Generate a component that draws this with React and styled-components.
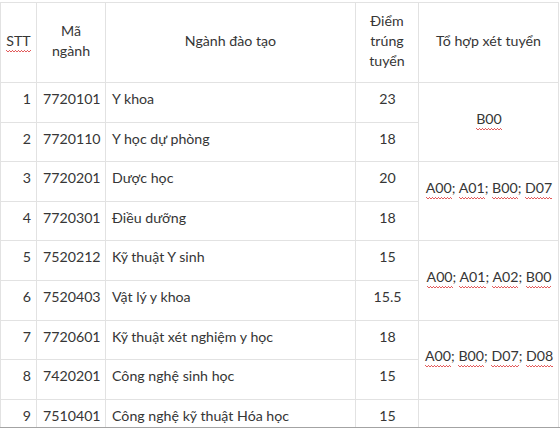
import styled, { createGlobalStyle } from "styled-components";

const rows = [
    { stt: 1, code: "7720101", name: "Y khoa", score: "23", group: { codes: ["B00"], span: 2 } },
    { stt: 2, code: "7720110", name: "Y học dự phòng", score: "18" },
    { stt: 3, code: "7720201", name: "Dược học", score: "20", group: { codes: ["A00", "A01", "B00", "D07"], span: 2, blankLine: true } },
    { stt: 4, code: "7720301", name: "Điều dưỡng", score: "18" },
    { stt: 5, code: "7520212", name: "Kỹ thuật Y sinh", score: "15", group: { codes: ["A00", "A01", "A02", "B00"], span: 2 } },
    { stt: 6, code: "7520403", name: "Vật lý y khoa", score: "15.5" },
    { stt: 7, code: "7720601", name: "Kỹ thuật xét nghiệm y học", score: "18", group: { codes: ["A00", "B00", "D07", "D08"], span: 2 } },
    { stt: 8, code: "7420201", name: "Công nghệ sinh học", score: "15" },
    { stt: 9, code: "7510401", name: "Công nghệ kỹ thuật Hóa học", score: "15", group: { codes: [], span: 1 } },
];

const Codes = ({ codes }) =>
    codes.map((c, i) => (
        <span key={c + i}>
            <Spell>{c}</Spell>
            {i < codes.length - 1 ? "; " : ""}
        </span>
    ));

export default function App() {
    return (
        <>
            <GlobalStyle />
            <Frame>
                <Table>
                    <colgroup>
                        <col style={{ width: 36 }} />
                        <col style={{ width: 69 }} />
                        <col style={{ width: 250 }} />
                        <col style={{ width: 63 }} />
                        <col style={{ width: 140 }} />
                    </colgroup>
                    <thead>
                        <tr>
                            <Th><Spell>STT</Spell></Th>
                            <Th>Mã<br />ngành</Th>
                            <Th>Ngành đào tạo</Th>
                            <Th>Điểm<br />trúng<br />tuyển</Th>
                            <Th>Tổ hợp xét tuyển</Th>
                        </tr>
                    </thead>
                    <tbody>
                        {rows.map((r) => (
                            <tr key={r.stt}>
                                <Td $align="right">{r.stt}</Td>
                                <Td $align="center">{r.code}</Td>
                                <Td>{r.name}</Td>
                                <Td $align="center">{r.score}</Td>
                                {r.group && (
                                    <Td $align="center" rowSpan={r.group.span}>
                                        <Codes codes={r.group.codes} />
                                        {r.group.blankLine && <><br />&nbsp;</>}
                                    </Td>
                                )}
                            </tr>
                        ))}
                    </tbody>
                </Table>
            </Frame>
        </>
    );
}

const GlobalStyle = createGlobalStyle`
    html, body {
        margin: 0;
        padding: 0;
        background: #fff;
    }
    body {
        font-family: Lato, "Open Sans", sans-serif;
        color: #363636;
        overflow: hidden;
    }
`;

const Frame = styled.div`
    height: 428px;
    box-sizing: border-box;
    padding-top: 2px;
    overflow: hidden;
    border-bottom: 1px solid #a3a3a3;
`;

const Table = styled.table`
    width: 558px;
    table-layout: fixed;
    border-collapse: collapse;
    font-size: 14.2px;
    line-height: 20px;
`;

const Th = styled.th`
    border: 1px solid #e2e2e2;
    padding: 8px 4px 11px;
    font-weight: normal;
    text-align: center;
    vertical-align: middle;
`;

const Td = styled.td`
    border: 1px solid #e2e2e2;
    padding: 6px 5px 12.6px 6px;
    text-align: ${(p) => p.$align || "left"};
    vertical-align: middle;
    white-space: nowrap;
`;

/* spell-check squiggle: small square wave under the word */
const Spell = styled.span`
    padding-bottom: 3px;
    background-image:
        linear-gradient(90deg, #e35d5d 50%, transparent 50%),
        linear-gradient(90deg, transparent 50%, #e35d5d 50%);
    background-size: 3px 1px, 3px 1px;
    background-repeat: repeat-x;
    background-position: 0 calc(100% - 1px), 0 100%;
`;
